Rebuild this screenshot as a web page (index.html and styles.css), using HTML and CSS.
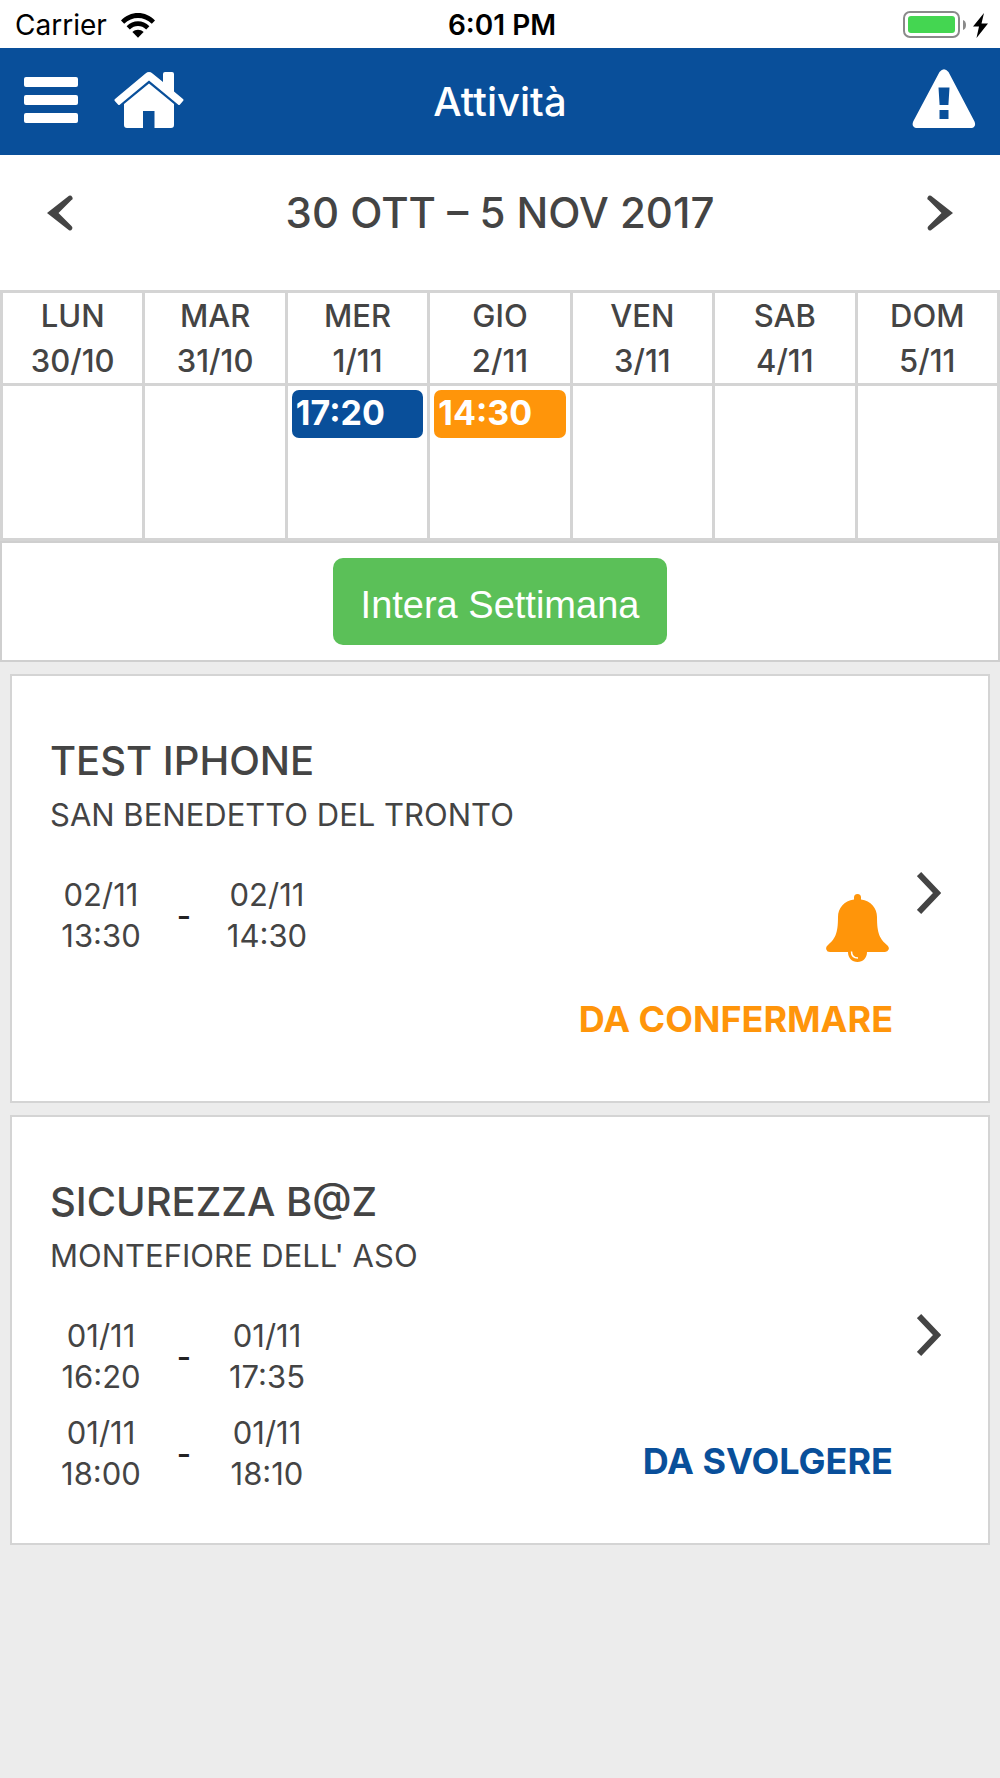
FILE: index.html
```
<!DOCTYPE html>
<html lang="it">
<head>
	<meta charset="utf-8">
	<meta name="viewport" content="width=device-width, initial-scale=1">
	<title>Attività</title>
	<link rel="stylesheet" href="styles.css">
</head>
<body>

<div class="statusbar">
	<div class="carrier">
		<span>Carrier</span>
		<svg width="34" height="25" viewBox="0 0 34 25">
			<path d="M0 7.5C9-2.5 25-2.5 34 7.5L30.8 10.8C23 3 11 3 3.2 10.8Z"/>
			<path d="M5.6 13.2C12 6.6 22 6.6 28.4 13.2L25.2 16.4C20.4 11.8 13.6 11.8 8.8 16.4Z"/>
			<path d="M11.4 19C14.6 16 19.4 16 22.6 19L17 24.8Z"/>
		</svg>
	</div>
	<div class="clock">6:01 PM</div>
	<div class="battery">
		<svg width="86" height="28" viewBox="0 0 86 28">
			<rect x="1" y="1" width="55" height="25" rx="6" fill="#fff" stroke="#8a8a8a" stroke-width="2"/>
			<rect x="5" y="5" width="47" height="17" rx="3" fill="#44d651"/>
			<path d="M60 9Q63 10 63 14T60 19Z" fill="#8a8a8a"/>
			<path d="M81 2L70 15.500H76L73.500 27L85 12.500H78.500Z" fill="#000"/>
		</svg>
	</div>
</div>

<header class="navbar">
	<div class="nav-left">
		<button class="icon-btn" type="button" aria-label="Menu">
			<svg width="54" height="46" viewBox="0 0 54 46" fill="#fff">
				<rect y="0" width="54" height="10" rx="2"/>
				<rect y="18" width="54" height="10" rx="2"/>
				<rect y="36" width="54" height="10" rx="2"/>
			</svg>
		</button>
		<a class="icon-btn" href="#" aria-label="Home">
			<svg width="70" height="56" viewBox="0 0 70 56" fill="#fff">
				<path d="M35 11.500L60 32V53Q60 56 57 56H40.500V39H29V56H13Q10 56 10 53V32Z"/>
				<path d="M31.500 1.500Q35 -1.300 38.500 1.500L49 10V2Q49 0 51 0H58Q60 0 60 2V19.500L69 27Q70 28 69 29L66 32.500Q65 33.500 64 32.500L35 8.500L6 32.500Q5 33.500 4 32.500L.8 29Q0 28 1 27Z"/>
			</svg>
		</a>
	</div>
	<h1>Attività</h1>
	<div class="nav-right">
		<button class="icon-btn" type="button" aria-label="Avvisi">
			<svg width="64" height="60" viewBox="0 0 64 60">
				<path fill="#fff" fill-rule="evenodd" d="M27.500 3Q32 -2.500 36.500 3L62.500 52.500Q64.500 57.500 60 59H4Q-.8 57.500 1.200 52.500ZM26.500 18.500L27.600 36H36.400L37.500 18.500ZM27.500 41V50H36.500V41Z"/>
			</svg>
		</button>
	</div>
</header>

<main>
	<section class="calendar">
		<div class="week-nav">
			<button class="icon-btn" type="button" aria-label="Settimana precedente">
				<svg width="26" height="36" viewBox="0 0 26 36">
					<path fill="#444" d="M0 18L22 .8Q24 0 25.200 2T24.500 5L11.500 18L24.500 31Q26 32.500 25 34.200T22 35.200Z"/>
				</svg>
			</button>
			<h2>30 OTT – 5 NOV 2017</h2>
			<button class="icon-btn" type="button" aria-label="Settimana successiva">
				<svg width="26" height="36" viewBox="0 0 26 36">
					<path fill="#444" d="M26 18L4 .8Q2 0 .8 2T1.500 5L14.500 18L1.500 31Q0 32.500 1 34.200T4 35.200Z"/>
				</svg>
			</button>
		</div>

		<table class="week">
			<thead>
				<tr>
					<th>LUN<br>30/10</th>
					<th>MAR<br>31/10</th>
					<th>MER<br>1/11</th>
					<th>GIO<br>2/11</th>
					<th>VEN<br>3/11</th>
					<th>SAB<br>4/11</th>
					<th>DOM<br>5/11</th>
				</tr>
			</thead>
			<tbody>
				<tr>
					<td></td>
					<td></td>
					<td><a class="event blue" href="#">17:20</a></td>
					<td><a class="event orange" href="#">14:30</a></td>
					<td></td>
					<td></td>
					<td></td>
				</tr>
			</tbody>
		</table>

		<div class="week-footer">
			<button class="btn-week" type="button">Intera Settimana</button>
		</div>
	</section>

	<article class="card">
		<div class="info">
			<h3>TEST IPHONE</h3>
			<p>SAN BENEDETTO DEL TRONTO</p>
			<div class="times">
				<span>02/11<br>13:30</span>
				<span class="dash">-</span>
				<span>02/11<br>14:30</span>
			</div>
		</div>
		<div class="state orange-text">
			<svg class="bell" width="63" height="68" viewBox="0 0 63 68">
				<path fill="#ff950a" d="M28 5.500V3.500Q28 0 31.500 0T35 3.500V5.500C45 7 51 14 51 23C51 40 54 45 61.500 51.500Q63.500 53.500 62.600 55.500T59 58H41C41 64 37 68 31.500 68S22 64 22 58H4Q1 58 .3 55.500T1.500 51.500C9 45 12 40 12 23C12 14 18 7 28 5.500Z"/>
				<path fill="none" stroke="#fff" stroke-width="1.500" d="M25.500 57.500C25.500 61.500 28 64 32 64"/>
			</svg>
			<strong>DA CONFERMARE</strong>
		</div>
		<a class="open" href="#" aria-label="Apri TEST IPHONE">
			<svg width="24" height="44" viewBox="0 0 24 44">
				<path fill="none" stroke="#444" stroke-width="6" d="M2 3L20 22L2 41"/>
			</svg>
		</a>
	</article>

	<article class="card">
		<div class="info">
			<h3>SICUREZZA B@Z</h3>
			<p>MONTEFIORE DELL' ASO</p>
			<div class="times">
				<span>01/11<br>16:20</span>
				<span class="dash">-</span>
				<span>01/11<br>17:35</span>
				<span>01/11<br>18:00</span>
				<span class="dash">-</span>
				<span>01/11<br>18:10</span>
			</div>
		</div>
		<div class="state blue-text">
			<strong>DA SVOLGERE</strong>
		</div>
		<a class="open" href="#" aria-label="Apri SICUREZZA B@Z">
			<svg width="24" height="44" viewBox="0 0 24 44">
				<path fill="none" stroke="#444" stroke-width="6" d="M2 3L20 22L2 41"/>
			</svg>
		</a>
	</article>
</main>

</body>
</html>
```
FILE: styles.css
```
* {
    box-sizing: border-box;
}

body {
    margin: 0;
    background-color: #ececec;
    color: #444;
    font-family: Inter, "Liberation Sans", sans-serif;
    font-size: 31px;
}

h1, h2, h3, p {
    margin: 0;
}

svg {
    display: block;
}

.icon-btn {
    display: block;
    padding: 0;
    border: none;
    background: none;
    cursor: pointer;
}

/* status bar */
.statusbar {
    display: grid;
    grid-template-columns: 1fr auto 1fr;
    align-items: center;
    height: 48px;
    padding: 2px 11px 0 15px;
    background-color: #fff;
    color: #000;
    font-size: 28px;
}

.carrier {
    display: flex;
    align-items: center;
    gap: 14px;
}

.clock {
    font-weight: 600;
}

.battery {
    justify-self: end;
}

/* top bar */
.navbar {
    display: grid;
    grid-template-columns: 1fr auto 1fr;
    align-items: center;
    height: 107px;
    padding: 0 24px;
    background-color: #094f9a;
    color: #fff;
}

.navbar h1 {
    font-size: 40px;
    font-weight: 500;
}

.nav-left {
    display: flex;
    align-items: center;
    gap: 36px;
    padding-bottom: 3px;
}

.nav-right {
    justify-self: end;
    padding-bottom: 6px;
}

/* calendar */
.calendar {
    background-color: #fff;
}

.week-nav {
    display: flex;
    justify-content: space-between;
    align-items: center;
    height: 135px;
    padding: 0 47px 20px;
}

.week-nav h2 {
    font-size: 42px;
    font-weight: 500;
}

.week {
    width: 100%;
    table-layout: fixed;
    border-collapse: collapse;
}

.week th, .week td {
    border: 3px solid #d4d4d4;
}

.week th {
    padding: 0;
    font-weight: 500;
    line-height: 45px;
}

.week td {
    height: 155px;
    padding: 4px;
    vertical-align: top;
}

.event {
    display: block;
    height: 48px;
    padding: 0 4px;
    border-radius: 7px;
    color: #fff;
    font-size: 34px;
    font-weight: 700;
    line-height: 45px;
    text-decoration: none;
}

.blue {
    background-color: #094f9a;
}

.orange {
    background-color: #ff950a;
}

.week-footer {
    padding: 15px;
    border: 2px solid #cfcfcf;
    text-align: center;
}

.btn-week {
    padding: 25px 28px 18px;
    border: none;
    border-radius: 10px;
    background-color: #5bc058;
    color: #fff;
    font-family: "Liberation Sans", Arial, sans-serif;
    font-size: 38px;
    line-height: 44px;
    vertical-align: top;
    cursor: pointer;
}

/* activities */
.card {
    display: flex;
    min-height: 429px;
    margin: 12px 10px;
    padding: 58px 47px 49px 38px;
    border: 2px solid #d4d4d4;
    background-color: #fff;
}

.info {
    flex: 1;
}

.info h3 {
    font-size: 40px;
    font-weight: 500;
    line-height: 54px;
}

.info p {
    line-height: 54px;
}

.times {
    display: grid;
    grid-template-columns: 102px 64px 102px;
    row-gap: 15px;
    margin-top: 32px;
    line-height: 41px;
    text-align: center;
}

.dash {
    align-self: center;
    color: #222;
    font-weight: 500;
}

.state {
    display: flex;
    flex-direction: column;
    justify-content: flex-end;
    align-items: flex-end;
    padding-bottom: 8px;
    font-size: 36px;
    line-height: 50px;
}

.bell {
    margin: 0 4px 32px 0;
}

.orange-text {
    color: #ff950a;
}

.blue-text {
    color: #094f9a;
}

.open {
    align-self: center;
    margin-left: 24px;
}
```
